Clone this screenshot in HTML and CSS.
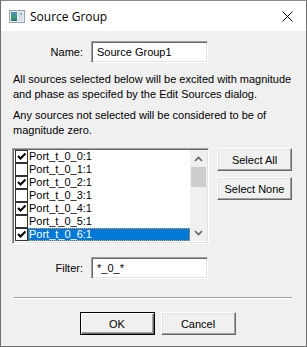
FILE: index.html
```html
<!DOCTYPE html>
<html lang="en">
<head>
    <meta charset="UTF-8">
    <title>Source Group</title>
    <link rel="stylesheet" href="styles.css">
</head>
<body>

<div class="window">
    <div class="titlebar">
        <svg class="app-icon" width="16" height="13" viewBox="0 0 16 13">
            <defs>
                <linearGradient id="pic" x1="0" y1="0" x2="0" y2="1">
                    <stop offset="0" stop-color="#4a8fc8"/>
                    <stop offset="0.6" stop-color="#3f9a6a"/>
                    <stop offset="1" stop-color="#2f6d8a"/>
                </linearGradient>
            </defs>
            <rect x="0.5" y="0.5" width="15" height="12" fill="#e8ecef" stroke="#9aa3aa"/>
            <rect x="2" y="2" width="6" height="9" fill="url(#pic)"/>
            <rect x="9" y="2" width="5" height="9" fill="#d6dde3"/>
            <rect x="11" y="3" width="2" height="2" fill="#8fb3cf"/>
        </svg>
        <span class="title">Source Group</span>
        <svg class="close" width="11" height="11" viewBox="0 0 11 11">
            <path d="M0.5 0.5 L10.5 10.5 M10.5 0.5 L0.5 10.5" stroke="#000" stroke-width="1"/>
        </svg>
    </div>

    <div class="content">
        <div class="field-row">
            <label class="field-label">Name:</label>
            <div class="edit">Source Group1</div>
        </div>

        <p class="info first">All sources selected below will be excited with magnitude and phase as specifed by the Edit Sources dialog.</p>
        <p class="info">Any sources not selected will be considered to be of magnitude zero.</p>

        <div class="list-row">
            <div class="listbox">
                <ul class="items" id="items"></ul>
                <div class="scrollbar">
                    <div class="arrow">
                        <svg width="9" height="6" viewBox="0 0 9 6"><path d="M1 5 L4.5 1.5 L8 5" fill="none" stroke="#606060" stroke-width="1.6"/></svg>
                    </div>
                    <div class="thumb"></div>
                    <div class="track"></div>
                    <div class="arrow">
                        <svg width="9" height="6" viewBox="0 0 9 6"><path d="M1 1 L4.5 4.5 L8 1" fill="none" stroke="#606060" stroke-width="1.6"/></svg>
                    </div>
                </div>
            </div>
            <div class="side-buttons">
                <button class="btn">Select All</button>
                <button class="btn">Select None</button>
            </div>
        </div>

        <div class="field-row filter-row">
            <label class="field-label">Filter:</label>
            <div class="edit">*_0_*</div>
        </div>

        <hr class="separator">

        <div class="dialog-buttons">
            <button class="btn default">OK</button>
            <button class="btn">Cancel</button>
        </div>
    </div>
</div>

<script>
    // ports shown in the list, checked = part of the group
    const ports = [
        { name: "Port_t_0_0:1", checked: true },
        { name: "Port_t_0_1:1", checked: false },
        { name: "Port_t_0_2:1", checked: true },
        { name: "Port_t_0_3:1", checked: false },
        { name: "Port_t_0_4:1", checked: true },
        { name: "Port_t_0_5:1", checked: false },
        { name: "Port_t_0_6:1", checked: true, selected: true }
    ];

    const list = document.getElementById("items");
    ports.forEach(port => {
        const li = document.createElement("li");
        li.className = "item" + (port.selected ? " selected" : "");
        const box = document.createElement("span");
        box.className = "check";
        if (port.checked) {
            box.innerHTML = '<svg width="11" height="11" viewBox="0 0 11 11"><path d="M2 5 L4.5 7.5 L9.5 2.5" fill="none" stroke="#000" stroke-width="2"/></svg>';
        }
        const text = document.createElement("span");
        text.className = "label";
        text.textContent = port.name;
        li.appendChild(box);
        li.appendChild(text);
        list.appendChild(li);
    });
</script>

</body>
</html>
```

FILE: styles.css
```css
* {
    margin: 0;
    padding: 0;
    box-sizing: border-box;
}

body {
    font-family: "Liberation Sans", Arial, sans-serif;
    font-size: 11px;
    color: #000;
    background: #fff;
}

.window {
    width: 307px;
    height: 347px;
    border: 1px solid #6f6f6f;
    border-top-color: #8a8a8a;
    background: #f0f0f0;
    display: flex;
    flex-direction: column;
}

.titlebar {
    height: 30px;
    background: #fff;
    display: flex;
    align-items: center;
    padding-left: 8px;
    padding-right: 13px;
}

.app-icon {
    margin-right: 5px;
}

.title {
    font-family: "Open Sans", "Noto Sans", sans-serif;
    font-size: 12px;
    flex: 1;
}

.content {
    flex: 1;
    padding: 10px 12px 0 11px;
}

.field-row {
    display: flex;
    align-items: center;
    gap: 8px;
}

.field-label {
    width: 71px;
    text-align: right;
}

.edit {
    width: 117px;
    height: 22px;
    background: #fff;
    border: 1px solid;
    border-color: #a0a0a0 #fff #fff #a0a0a0;
    box-shadow: inset 1px 1px 0 #696969, inset -1px -1px 0 #e3e3e3;
    padding: 3px 0 0 5px;
    line-height: 14px;
}

.info {
    line-height: 15px;
    margin-top: 6px;
    padding-left: 1px;
}

.info.first {
    margin-top: 9px;
}

.list-row {
    display: flex;
    gap: 8px;
    margin-top: 10px;
}

.listbox {
    width: 197px;
    height: 96px;
    background: #fff;
    border: 1px solid;
    border-color: #a0a0a0 #fff #fff #a0a0a0;
    box-shadow: inset 1px 1px 0 #696969, inset -1px -1px 0 #e3e3e3;
    padding: 1px 1px 2px 2px;
    display: flex;
}

.items {
    list-style: none;
    flex: 1;
}

.item {
    height: 13px;
    display: flex;
    align-items: center;
    line-height: 13px;
}

.check {
    width: 13px;
    height: 13px;
    border: 1px solid #333;
    background: #fff;
    display: flex;
    align-items: center;
    justify-content: center;
    margin-right: 1px;
    flex-shrink: 0;
}

.item.selected {
    background: #0078d7;
    color: #fff;
}

.item.selected .label {
    flex: 1;
    outline: 1px dotted #f0a040;
    outline-offset: -1px;
    height: 13px;
}

.scrollbar {
    width: 17px;
    display: flex;
    flex-direction: column;
    background: #f0f0f0;
}

.arrow {
    height: 17px;
    display: flex;
    align-items: center;
    justify-content: center;
}

.thumb {
    height: 20px;
    margin: 0 1px;
    background: #cdcdcd;
}

.track {
    flex: 1;
}

.side-buttons {
    display: flex;
    flex-direction: column;
    gap: 6px;
}

.btn {
    width: 75px;
    height: 23px;
    font-family: "Liberation Sans", Arial, sans-serif;
    font-size: 11px;
    color: #000;
    background: #f0f0f0;
    border: 1px solid;
    border-color: #fff #696969 #696969 #fff;
    box-shadow: inset -1px -1px 0 #a0a0a0, inset 1px 1px 0 #e3e3e3;
}

.btn.default {
    border: 1px solid #000;
    box-shadow: inset 1px 1px 0 #fff, inset -1px -1px 0 #696969, inset -2px -2px 0 #a0a0a0;
}

.filter-row {
    margin-top: 13px;
}

.separator {
    margin: 18px 2px 0 2px;
    border: none;
    border-top: 1px solid #a0a0a0;
    border-bottom: 1px solid #fff;
}

.dialog-buttons {
    display: flex;
    justify-content: center;
    gap: 6px;
    margin-top: 13px;
    margin-right: -9px;
}
```
